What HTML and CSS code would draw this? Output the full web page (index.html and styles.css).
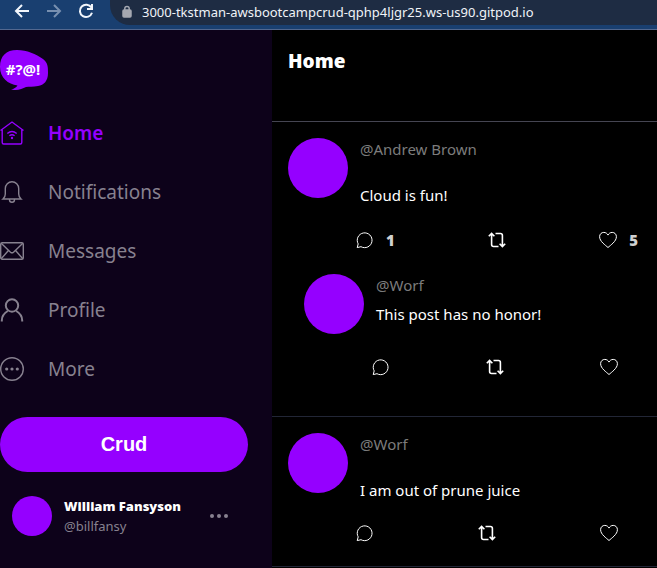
FILE: index.html
```html
<!DOCTYPE html>
<html lang="en">
<head>
<meta charset="utf-8">
<title>Home</title>
<link rel="stylesheet" href="styles.css">
</head>
<body>
<svg class="defs" aria-hidden="true">
  <symbol id="comment" viewBox="0 0 18 18"><path d="M1.2 16.6 2.2 12.900A7.400 7.400 0 1 1 5 15.700Z"/></symbol>
  <symbol id="repost" viewBox="0 0 18 18"><path d="M.8 5.2 3.600 2.400 6.400 5.200M3.600 2.800V13.500Q3.600 15.500 5.600 15.500H10.500M7.500 2.500H12.400Q14.400 2.500 14.400 4.500V15.200M11.600 12.800 14.400 15.600 17.200 12.800"/></symbol>
  <symbol id="heart" viewBox="0 0 18 18"><path d="M9 16.5C6.5 14.2.6 10.4.6 5.7.6 3 2.6 1.4 4.8 1.4 6.8 1.4 8.2 2.5 9 4.1 9.8 2.5 11.2 1.4 13.2 1.4 15.4 1.4 17.4 3 17.4 5.7 17.4 10.4 11.5 14.2 9 16.5Z"/></symbol>
</svg>
<header class="browser">
  <button class="tool" aria-label="Back"><svg width="16" height="16" viewBox="0 0 16 16"><path d="M15 8H2M8 2 2 8l6 6"/></svg></button>
  <button class="tool tool-off" aria-label="Forward"><svg width="16" height="16" viewBox="0 0 16 16"><path d="M1 8h13M8 2l6 6-6 6"/></svg></button>
  <button class="tool" aria-label="Reload"><svg width="16" height="16" viewBox="0 0 16 16"><path d="M13.4 4.6A6.2 6.2 0 1 0 14 9.8M14 1V6H9"/></svg></button>
  <div class="address">
    <svg width="10" height="14" viewBox="0 0 10 14" aria-hidden="true"><rect class="lock" x="1" y="5" width="8" height="7" rx="1"/><path d="M2.8 6V3.6a2.2 2.2 0 0 1 4.4 0V6"/></svg>
    <input type="text" aria-label="Address" value="3000-tkstman-awsbootcampcrud-qphp4ljgr25.ws-us90.gitpod.io">
  </div>
</header>
<div class="page">
  <aside class="sidebar">
    <svg class="logo" width="48" height="40" viewBox="0 0 48 40" role="img" aria-label="Logo">
      <path class="bubble" d="M0 17C0 6 6 0 17 0c10 0 19 4 26 9 5 4 5 8 5 14 0 8-4 12-10 13-5 1-9 .5-12 1-4 2-10 4-15 2.500 3-.5 5-2 6.500-4C8 34 0 28 0 17Z"/>
      <text x="23" y="25" text-anchor="middle">#?@!</text>
    </svg>
    <nav class="nav">
      <a class="active" href="#"><svg viewBox="0 0 24 24"><path d="M.5 9.500 12 1l11.500 8.500M2.200 8.500V21.500q0 1.500 1.500 1.500H20.300q1.500 0 1.500-1.500V8.500M7.300 12.500q4.700-4 9.400 0M9.400 14.700q2.600-2 5.200 0"/><circle class="dot" cx="12" cy="17" r="1.200"/></svg>Home</a>
      <a href="#"><svg viewBox="0 0 24 24"><path d="M3 19q2.300-2 2.300-5V8.500a6.700 6.700 0 0 1 13.400 0V14q0 3 2.300 5ZM9.500 19v.7a2.500 2.500 0 0 0 5 0V19"/></svg>Notifications</a>
      <a href="#"><svg viewBox="0 0 24 24"><rect x=".7" y="3.700" width="22.600" height="16.600" rx="1.500"/><path d="m1.200 4.200 9.300 9q1.500 1.300 3 0l9.300-9M1.200 19.800l7-8M22.800 19.800l-7-8"/></svg>Messages</a>
      <a href="#"><svg class="bold" viewBox="0 0 24 24"><circle cx="12" cy="7.500" r="6.200"/><path d="M1.800 23.500v-1c0-3.500 2.500-7.500 6-9.500M22.200 23.500v-1c0-3.500-2.500-7.500-6-9.500"/></svg>Profile</a>
      <a href="#"><svg viewBox="0 0 24 24"><circle cx="12" cy="12" r="11.300"/><g class="dot"><circle cx="6.700" cy="12" r="1.600"/><circle cx="12" cy="12" r="1.600"/><circle cx="17.300" cy="12" r="1.600"/></g></svg>More</a>
    </nav>
    <button class="crud">Crud</button>
    <div class="user">
      <span class="avatar avatar-small"></span>
      <div class="identity"><strong>William Fansyson</strong><span>@billfansy</span></div>
      <button class="more" aria-label="Account menu"><svg width="18" height="4" viewBox="0 0 18 4"><circle cx="2" cy="2" r="2"/><circle cx="9" cy="2" r="2"/><circle cx="16" cy="2" r="2"/></svg></button>
    </div>
  </aside>
  <main class="feed">
    <h1>Home</h1>
    <section class="thread">
      <article class="post">
        <span class="avatar"></span>
        <div class="content">
          <a class="handle" href="#">@Andrew Brown</a>
          <p>Cloud is fun!</p>
          <div class="actions">
            <button aria-label="Reply"><svg><use href="#comment"/></svg>1</button>
            <button class="repost" aria-label="Repost"><svg><use href="#repost"/></svg></button>
            <button aria-label="Like"><svg><use href="#heart"/></svg>5</button>
          </div>
        </div>
      </article>
      <article class="post reply">
        <span class="avatar"></span>
        <div class="content">
          <a class="handle" href="#">@Worf</a>
          <p>This post has no honor!</p>
          <div class="actions uncounted">
            <button aria-label="Reply"><svg><use href="#comment"/></svg></button>
            <button class="repost" aria-label="Repost"><svg><use href="#repost"/></svg></button>
            <button aria-label="Like"><svg><use href="#heart"/></svg></button>
          </div>
        </div>
      </article>
    </section>
    <section class="thread">
      <article class="post">
        <span class="avatar"></span>
        <div class="content">
          <a class="handle" href="#">@Worf</a>
          <p>I am out of prune juice</p>
          <div class="actions uncounted">
            <button aria-label="Reply"><svg><use href="#comment"/></svg></button>
            <button class="repost" aria-label="Repost"><svg><use href="#repost"/></svg></button>
            <button aria-label="Like"><svg><use href="#heart"/></svg></button>
          </div>
        </div>
      </article>
    </section>
  </main>
</div>
</body>
</html>
```
FILE: styles.css
```css
* { box-sizing: border-box; }
body {
  display: flex;
  flex-direction: column;
  min-height: 100vh;
  margin: 0;
  background: #000;
  color: #fff;
  font: 15px/20px "Segoe UI", "Noto Sans", "Open Sans", sans-serif;
}
button {
  padding: 0;
  border: 0;
  background: none;
  color: inherit;
  font: inherit;
  cursor: pointer;
}
a { color: inherit; text-decoration: none; }
svg { display: block; flex: none; fill: none; stroke: currentColor; }
.defs { position: absolute; width: 0; height: 0; }

.browser {
  display: flex;
  gap: 16px;
  height: 30px;
  padding-left: 14px;
  border-bottom: 1px solid #53688f;
  background: #193f70;
  color: #f2f6fc;
}
.tool { height: 22px; stroke-width: 2; }
.tool-off { color: #7890b0; }
.address {
  display: flex;
  flex: 1;
  gap: 10px;
  height: 25px;
  padding: 0 0 2px 12px;
  align-items: center;
  border-radius: 0 0 0 20px;
  background: #1e2c43;
}
.address svg { color: #a5a8b1; stroke-width: 1.5; }
.lock { fill: currentColor; }
.address input {
  flex: 1;
  min-width: 0;
  padding: 0;
  border: 0;
  outline: 0;
  background: none;
  color: #f0f3f8;
  font: inherit;
  font-size: 13px;
}

.page { display: flex; flex: 1; }
.sidebar {
  width: 272px;
  flex: none;
  padding: 20px 24px 20px 0;
  background: #0d021a;
}
.logo .bubble { fill: #9500ff; stroke: none; }
.logo text {
  fill: #fff;
  stroke: none;
  font: bold 15px "Noto Sans", sans-serif;
}
.nav { display: grid; margin-top: 13px; }
.nav a {
  display: flex;
  height: 59px;
  align-items: center;
  gap: 24px;
  color: #87818f;
  font-size: 19px;
}
.nav svg { width: 24px; height: 24px; stroke-width: 1.4; }
.nav .bold { stroke-width: 2; }
.nav .active { color: #9500ff; font-weight: 600; }
.dot { fill: currentColor; stroke: none; }
.crud {
  display: block;
  width: 100%;
  height: 55px;
  margin-top: 19px;
  border-radius: 28px;
  background: #9500ff;
  font: bold 20px "Liberation Sans", Arial, sans-serif;
}
.user { display: flex; margin-top: 24px; padding: 0 20px 0 12px; gap: 12px; align-items: center; }
.avatar {
  width: 60px;
  height: 60px;
  flex: none;
  border-radius: 50%;
  background: #9500ff;
}
.avatar-small { width: 40px; height: 40px; }
.identity { display: grid; flex: 1; font-size: 13px; white-space: nowrap; }
.identity strong { font-weight: 900; }
.identity span { color: #87818f; }
.more { color: #87818f; }
.more svg { fill: currentColor; stroke: none; }

.feed { flex: 1; min-width: 0; }
h1 {
  height: 92px;
  margin: 0;
  padding: 19px 16px;
  border-bottom: 1px solid #454552;
  font-size: 19px;
  font-weight: 900;
  line-height: 24px;
}
.thread { border-bottom: 1px solid #222636; }
.post { display: flex; gap: 12px; padding: 16px 16px 0; }
.thread > :last-child { padding-bottom: 18px; }
.content { flex: 1; min-width: 0; padding-top: 1px; }
.handle { display: block; color: #7c7c7c; }
.post p { margin: 26px 0 0; }
.actions {
  display: flex;
  height: 30px;
  justify-content: space-between;
  margin: 20px 3px 0 -4px;
}
.actions button { display: flex; align-items: center; gap: 12px; height: 30px; color: #d0d0d0; font-weight: 900; }
.actions svg { width: 18px; height: 18px; color: #fff; }
.actions .repost { stroke-width: 1.6; }
.actions.uncounted { margin-top: 18px; margin-right: 23px; }
.post.reply { padding: 19px 16px 34px 32px; }
.reply p { margin-top: 9px; }
.reply .actions.uncounted { margin-top: 28px; }
```
